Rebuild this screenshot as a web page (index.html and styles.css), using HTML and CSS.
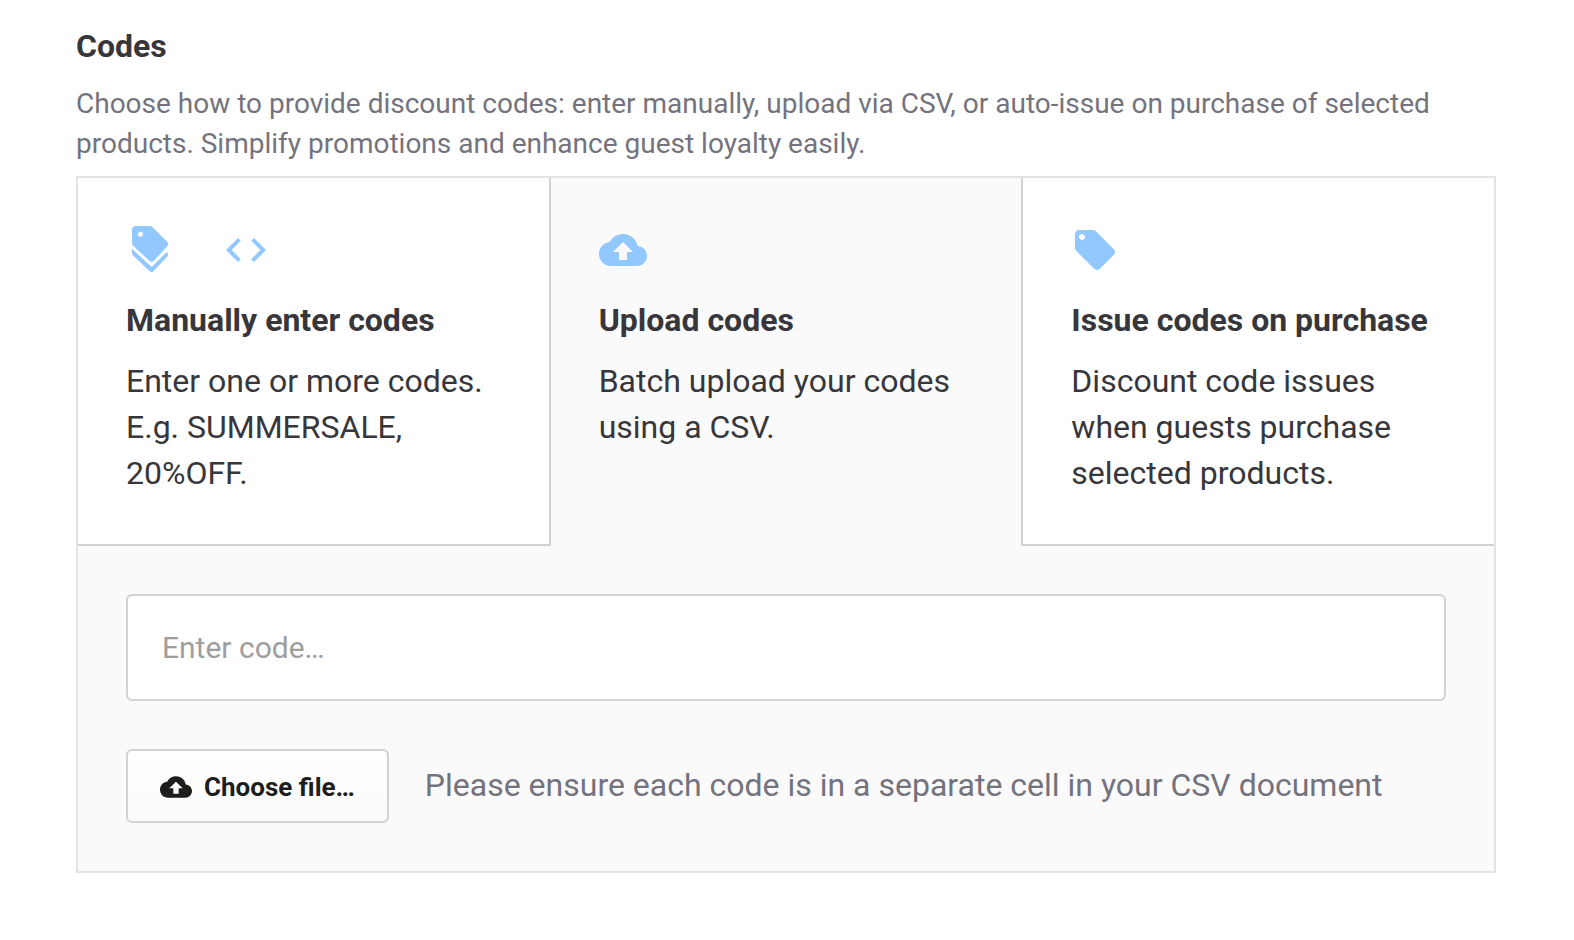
FILE: index.html
```html
<!DOCTYPE html>
<html lang="en">
<head>
<meta charset="utf-8">
<meta name="viewport" content="width=device-width, initial-scale=1">
<title>Codes</title>
<link rel="stylesheet" href="styles.css">
</head>
<body>
<main class="page">
  <h1 class="title">Codes</h1>
  <p class="intro">Choose how to provide discount codes: enter manually, upload via CSV, or auto-issue on purchase of selected products. Simplify promotions and enhance guest loyalty easily.</p>
  <section class="codes">
    <div class="tabs" role="tablist" aria-label="Code source">
      <button class="tab tab-first" type="button" role="tab" aria-selected="false">
        <span class="icons">
          <svg class="icon" viewBox="0 0 24 24" aria-hidden="true"><path fill-rule="evenodd" d="M4.9 0H11.8C12.4 0 12.9.2 13.3.6L20.5 7.8C21.2 8.5 21.2 9.5 20.5 10.2L14 17.4C13.3 18.1 12.3 18.1 11.6 17.4L3.6 9.9C3.2 9.5 3 9 3 8.5V1.9C3 .8 3.8 0 4.9 0ZM7.2 2.9A1.25 1.25 0 1 0 7.2 5.4A1.25 1.25 0 1 0 7.2 2.9Z"/><path d="M3 11.4L12.8 20.5L20.4 13C21.2 13.8 21.2 14.7 20.5 15.4L13.8 22.5C13.2 23.1 12.3 23.1 11.7 22.5L3.6 14.8C3.2 14.4 3 14 3 13.5Z"/></svg>
          <svg class="icon" viewBox="0 0 24 24" aria-hidden="true"><path d="M9.4 16.6L4.8 12l4.6-4.6L8 6l-6 6 6 6 1.4-1.4zm5.2 0l4.6-4.6-4.6-4.6L16 6l6 6-6 6-1.4-1.4z"/></svg>
        </span>
        <span class="tab-title">Manually enter codes</span>
        <span class="tab-text">Enter one or more codes. E.g. SUMMERSALE, 20%OFF.</span>
      </button>
      <button class="tab tab-active" type="button" role="tab" id="tab-upload" aria-selected="true" aria-controls="panel-upload">
        <span class="icons">
          <svg class="icon" viewBox="0 0 24 24" aria-hidden="true"><path d="M19.35 10.04C18.67 6.59 15.64 4 12 4 9.11 4 6.6 5.64 5.35 8.04 2.34 8.36 0 10.91 0 14c0 3.31 2.69 6 6 6h13c2.76 0 5-2.24 5-5 0-2.64-2.05-4.78-4.65-4.96zM14 13v4h-4v-4H7l5-5 5 5h-3z"/></svg>
        </span>
        <span class="tab-title">Upload codes</span>
        <span class="tab-text">Batch upload your codes using a CSV.</span>
      </button>
      <button class="tab tab-last" type="button" role="tab" aria-selected="false">
        <span class="icons">
          <svg class="icon" viewBox="0 0 24 24" aria-hidden="true"><path d="M21.41 11.58l-9-9C12.05 2.22 11.55 2 11 2H4c-1.1 0-2 .9-2 2v7c0 .55.22 1.05.59 1.42l9 9c.36.36.86.58 1.41.58s1.05-.22 1.41-.59l7-7c.37-.36.59-.86.59-1.41s-.23-1.06-.59-1.42zM5.5 7C4.67 7 4 6.33 4 5.5S4.67 4 5.5 4 7 4.67 7 5.5 6.33 7 5.5 7z"/></svg>
        </span>
        <span class="tab-title">Issue codes on purchase</span>
        <span class="tab-text">Discount code issues when guests purchase selected products.</span>
      </button>
    </div>
    <div class="panel" role="tabpanel" id="panel-upload" aria-labelledby="tab-upload">
      <input class="code-input" type="text" aria-label="Code" placeholder="Enter code…">
      <div class="upload">
        <button class="choose" type="button" aria-describedby="upload-hint">
          <svg class="choose-icon" viewBox="0 0 24 24" aria-hidden="true"><path d="M19.35 10.04C18.67 6.59 15.64 4 12 4 9.11 4 6.6 5.64 5.35 8.04 2.34 8.36 0 10.91 0 14c0 3.31 2.69 6 6 6h13c2.76 0 5-2.24 5-5 0-2.64-2.05-4.78-4.65-4.96zM14 13v4h-4v-4H7l5-5 5 5h-3z"/></svg>
          <span>Choose file…</span>
        </button>
        <p class="hint" id="upload-hint">Please ensure each code is in a separate cell in your CSV document</p>
      </div>
    </div>
  </section>
</main>
</body>
</html>
```
FILE: styles.css
```css
* {
  box-sizing: border-box;
}

body {
  margin: 0;
  background: #fff;
  color: #37363b;
  font-family: Roboto, "Liberation Sans", sans-serif;
}

button,
input {
  font-family: inherit;
}

.page {
  padding: 24px 78px 68px 76px;
}

.title {
  margin: 0;
  font-size: 32px;
  line-height: 44px;
  font-weight: 700;
}

.intro {
  margin: 16px 0 12px;
  color: #74737d;
  font-size: 28px;
  line-height: 40px;
}

.codes {
  border: 2px solid #e3e3e3;
  background: #fafafa;
}

.tabs {
  display: flex;
}

.tab {
  display: flex;
  flex: 1 1 0;
  flex-direction: column;
  align-items: flex-start;
  min-width: 0;
  margin: 0;
  padding: 48px;
  border: 0 solid #d2d2d2;
  border-bottom-width: 2px;
  border-radius: 0;
  background: #fff;
  color: #37363b;
  font-size: 32px;
  line-height: 46px;
  text-align: left;
  cursor: pointer;
}

.tab-first {
  border-right-width: 2px;
}

.tab-last {
  border-left-width: 2px;
}

.tab-active {
  border-bottom-color: transparent;
  background: transparent;
}

.icons {
  display: flex;
  gap: 48px;
  margin-bottom: 24px;
}

.icon {
  width: 48px;
  height: 48px;
  fill: #90c8ff;
}

.tab-title {
  margin-bottom: 16px;
  line-height: 44px;
  font-weight: 700;
}

.panel {
  display: flex;
  flex-direction: column;
  gap: 48px;
  padding: 48px;
}

.code-input {
  width: 100%;
  height: 107px;
  padding: 0 34px;
  border: 2px solid #d2d2d2;
  border-radius: 6px;
  background: #fff;
  color: #37363b;
  font-size: 30px;
}

.code-input::placeholder {
  color: #9e9e9e;
  opacity: 1;
}

.upload {
  display: flex;
  align-items: center;
  gap: 36px;
}

.choose {
  display: flex;
  flex: none;
  align-items: center;
  gap: 12px;
  height: 74px;
  padding: 2px 32px 0;
  border: 2px solid #d2d2d2;
  border-radius: 6px;
  background: linear-gradient(#fff, #fafafa);
  color: #1d1d1b;
  font-size: 26px;
  font-weight: 700;
  cursor: pointer;
}

.choose-icon {
  width: 32px;
  height: 32px;
  fill: #1d1d1b;
}

.hint {
  margin: 0;
  padding-bottom: 2px;
  color: #74737d;
  font-size: 32px;
  line-height: 46px;
}
```
